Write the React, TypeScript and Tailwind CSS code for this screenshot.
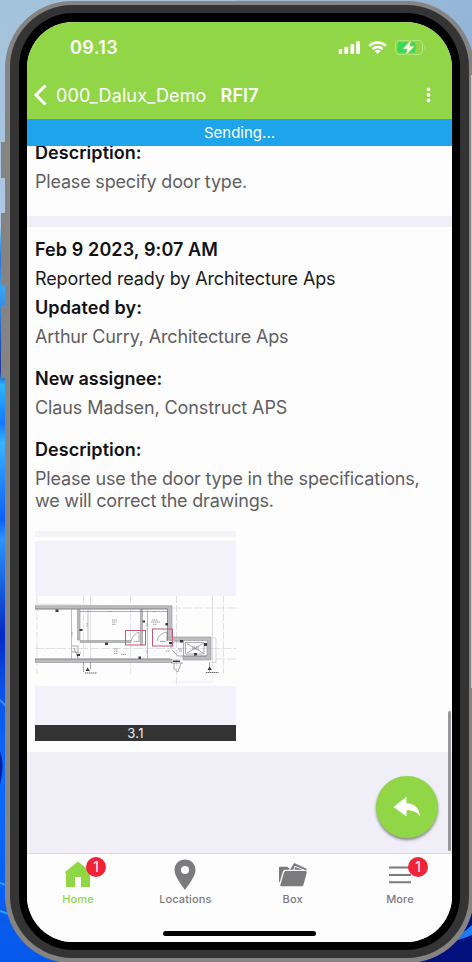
import type { ReactNode } from "react";

function Desktop() {
  return (
    <svg className="absolute inset-0" width="472" height="962" viewBox="0 0 472 962">
      <defs>
        <linearGradient id="sky" x1="0" y1="0" x2="0" y2="1">
          <stop offset="0" stopColor="#a3c3dc" />
          <stop offset="0.17" stopColor="#a8c6e2" />
          <stop offset="0.235" stopColor="#b0c8e4" />
          <stop offset="0.25" stopColor="#4aa6ee" />
          <stop offset="0.27" stopColor="#2d6fd6" />
          <stop offset="0.3" stopColor="#38a5f8" />
          <stop offset="0.36" stopColor="#2250b4" />
          <stop offset="0.385" stopColor="#28359c" />
          <stop offset="0.4" stopColor="#2cb4fb" />
          <stop offset="0.44" stopColor="#1478ff" />
          <stop offset="0.46" stopColor="#38b4ff" />
          <stop offset="0.54" stopColor="#0c5ff8" />
          <stop offset="0.56" stopColor="#2a96fb" />
          <stop offset="0.66" stopColor="#0428c6" />
          <stop offset="0.71" stopColor="#0b4ee6" />
          <stop offset="0.8" stopColor="#0b6cff" />
          <stop offset="1" stopColor="#0658ea" />
        </linearGradient>
        <linearGradient id="corner" x1="0" y1="0" x2="1" y2="1">
          <stop offset="0" stopColor="#9db9d2" />
          <stop offset="1" stopColor="#8db4dc" />
        </linearGradient>
      </defs>
      <rect width="236" height="962" fill="url(#sky)" />
      <rect x="236" width="236" height="100" fill="url(#corner)" />
      <rect x="236" y="860" width="236" height="102" fill="#00107c" />
      <path d="M440 944 Q458 938 472 925 V935 Q458 941 440 944Z" fill="#1d7af0" />
      <path d="M0 700 Q14 712 18 745" fill="none" stroke="#3a8cf8" strokeWidth="2" />
      <path d="M0 752 Q5 762 0 785Z" fill="#0420a0" />
      <path d="M0 883 Q14 887 24 896" fill="none" stroke="#2d9cfc" strokeWidth="2" />
      <path d="M0 911 Q14 915 24 924" fill="none" stroke="#2d9cfc" strokeWidth="2" />
    </svg>
  );
}

function StatusIcons() {
  return (
    <svg width="90" height="18" viewBox="338 38 90 18" className="block">
      <g fill="#fff">
        <rect x="338.600" y="49" width="3.600" height="5" rx="1" />
        <rect x="344.400" y="46.700" width="3.800" height="7.300" rx="1" />
        <rect x="350.400" y="44" width="3.800" height="10" rx="1" />
        <rect x="356.200" y="41" width="3.800" height="13" rx="1" />
      </g>
      <g fill="none" stroke="#fff" strokeWidth="2.500">
        <path d="M369.300 45.800 A11.800 11.800 0 0 1 385.900 45.800" />
        <path d="M372.600 49 A7.300 7.300 0 0 1 382.600 49" />
      </g>
      <path d="M377.600 54 L374.700 51.100 A4.200 4.200 0 0 1 380.500 51.100Z" fill="#fff" />
      <rect x="395.500" y="40.500" width="27" height="14" rx="4" fill="none" stroke="#b4e383" strokeWidth="1.100" />
      <path d="M424 45.500 Q425.500 47.500 424 49.800Z" fill="#b4e383" />
      <rect x="397.300" y="42.300" width="18.200" height="10.400" rx="2.300" fill="#35db5c" />
      <path d="M410.800 40.600 L403.300 48.700 H407.700 L406.200 54.600 L414 46.500 H409.500Z" fill="#fff" stroke="#8fd744" strokeWidth="1.400" paintOrder="stroke" strokeLinejoin="round" />
    </svg>
  );
}

function FloorPlan() {
  return (
    <svg width="201" height="90" viewBox="35 596 201 90" className="block bg-[#fdfdfe]">
      <g stroke="#d2d2d7" strokeWidth="0.700" fill="none">
        <path d="M37 596V674M83.500 596V672M130.500 596V674M176.500 596V690M223.500 596V674" strokeDasharray="7 2" />
        <path d="M90.500 596V668M212.500 596V668M35 604L172 607" />
        <path d="M35 648.500H236M172 608H236M172 659H236" strokeDasharray="9 2" />
        <path d="M172 682H213V668" stroke="#e6e6ea" />
      </g>
      <g fill="#bcbcc0" stroke="#939397" strokeWidth="0.600">
        <path d="M35 605.800H172V640H167.500V609H35Z" />
        <path d="M35 659H172V662.500H35Z" />
        <path d="M77.500 609H80V640H77.500ZM80 640.500H131V642.500H80Z" />
        <path d="M140.500 609H142.500V645H140.500Z" />
        <path d="M169 637H211V660H183V656H207V640.500H169Z" />
      </g>
      <g stroke="#77777c" strokeWidth="0.600" fill="none">
        <path d="M35 609H167.500V641M35 659H170M80 611.500H168" />
        <path d="M71.500 609V659M147.500 610V659M88 609V641M78 656V660" stroke="#96969a" />
        <path d="M183.500 640V656H207M185.500 642.500H204V654H185.500ZM187 643.500L203 653M187 653L203 643.500" />
        <path d="M72 646H78V652H72M74 648L78 658M171 648V644Q176 640 180 642M172 650L178 656H183" />
        <path d="M171 663H183M174 663V669L178 672L181 663" />
        <path d="M83.500 662V672M90.500 662V669M209.500 662V672" />
        <path d="M131 641Q133 634 139 632V641M157 641Q159 633 167 632V641" />
      </g>
      <path d="M211 662.500H216V638H212" fill="none" stroke="#c9c9ce" strokeWidth="0.700" />
      <g fill="#3a3a3c">
        <rect x="55.500" y="609.500" width="3" height="2.500" /><rect x="79.500" y="629" width="3" height="2" />
        <rect x="105" y="642.500" width="3" height="2.500" /><rect x="165.500" y="623" width="2.500" height="2.500" />
        <rect x="142.500" y="620.500" width="2.500" height="2" /><rect x="138.500" y="656.500" width="2.500" height="2.500" />
        <rect x="169" y="642" width="4" height="2" /><rect x="180" y="640" width="3" height="2.500" />
        <rect x="204" y="643" width="3" height="3" /><rect x="194" y="653" width="3" height="2.500" />
        <rect x="173" y="660.500" width="7" height="1.500" /><rect x="77" y="654" width="3" height="2" />
        <path d="M87.500 667.500L90 671L85.500 671ZM209.500 666.500L212 670L207.500 670Z" />
      </g>
      <g stroke="#909094" strokeWidth="0.900" strokeDasharray="1.500 0.500">
        <path d="M112 620H117M112 622H116.500M112 624.300H116M114 649H118M114 651.300H118M114 653.500H117M152 620H158M151 622H160M153 624.300H157M192 647H199M192 649H199" />
        <path d="M108 611.500H112M153 611.500H157M72 632V636M87 623V627M147 623V627M147 650V653M134 641.500H140M160 641.500H166M121 654.500H126M166 651H170M178 649H182M179 651H182M76 653H81" />
        <path d="M85 673H96.500M206 672.500H218.500" stroke="#555" />
      </g>
      <g fill="none" stroke="#c45b72" strokeWidth="1">
        <rect x="125.500" y="630.500" width="20" height="14.500" /><rect x="152.500" y="629" width="20" height="17" />
      </g>
    </svg>
  );
}

function Badge() {
  return (
    <span className="absolute left-[33px] top-0 flex h-5 w-5 items-center justify-center rounded-full bg-[#f02337] text-[14px] leading-none text-white">1</span>
  );
}

function Tab({ label, active, badge, children }: { label: string; active?: boolean; badge?: boolean; children: ReactNode }) {
  return (
    <div className={`relative flex w-[50px] flex-col items-center ${active ? "text-[#8fd744]" : "text-[#7b7b7e]"}`}>
      <svg width="34" height="34" viewBox="0 0 34 34" fill="currentColor" className="block">{children}</svg>
      <span className="whitespace-nowrap text-[11px] font-medium leading-4 tracking-[0.12px]">{label}</span>
      {badge && <Badge />}
    </div>
  );
}

const heading = "font-semibold text-[#111113]";
const value = "mt-[7px] text-[#5f5f61]";

export default function App() {
  return (
    <div className="relative h-[962px] w-[472px] overflow-hidden bg-[#a3c3dc] font-['Inter','Liberation_Sans',sans-serif]">
      <Desktop />
      <span className="absolute left-[1px] top-[142px] h-9 w-[6px] bg-[#858381]" />
      <span className="absolute left-[1px] top-[213px] h-[72px] w-[6px] bg-[#858381]" />
      <span className="absolute left-[1px] top-[305px] h-[73px] w-[6px] bg-[#858381]" />
      <div className="absolute left-[5px] top-[0.500px] h-[962px] w-[469px] rounded-[67px] bg-[#868482] p-[5px] pt-[4.500px]">
        <div className="h-[953px] w-[459px] rounded-[62px] bg-[#333433] px-[9px] pt-[8px]">
          <div className="h-[937px] w-[441px] rounded-[54px] bg-black px-2 pt-[9px]">
            <div className="relative flex h-[920px] w-[425px] flex-col overflow-hidden rounded-[46px] bg-[#fdfdfe]">
              <header className="h-[97px] shrink-0 bg-[#91d646] text-white">
                <div className="flex h-[50px] items-start justify-between pl-[43px] pr-[24px] pt-[16px]">
                  <span className="text-[18px] font-semibold leading-5 tracking-[0.4px]">09.13</span>
                  <StatusIcons />
                </div>
                <div className="flex h-[46px] items-center pl-[6px] pr-[21px]">
                  <svg width="16" height="24" viewBox="0 0 16 24" className="block"><path d="M12.500 2.500L3 12L12.500 21.500" fill="none" stroke="#fff" strokeWidth="3" /></svg>
                  <span className="ml-[7px] text-[18px] tracking-[0.12px]">000_Dalux_Demo</span>
                  <span className="ml-[14px] text-[18px] font-semibold tracking-[0.1px]">RFI7</span>
                  <svg width="5" height="16" viewBox="0 0 5 16" className="ml-auto block" fill="#fff"><circle cx="2.500" cy="2.500" r="1.900" /><circle cx="2.500" cy="8" r="1.900" /><circle cx="2.500" cy="13.500" r="1.900" /></svg>
                </div>
              </header>
              <div className="flex h-[27px] shrink-0 items-center justify-center bg-[#1da4ea] pt-px text-[15px] tracking-[0px] text-white">Sending...</div>

              <main className="flex h-[707px] shrink-0 flex-col overflow-hidden bg-[#f0eff8] text-[18px] leading-[22px]">
                <section className="h-[70px] shrink-0 bg-[#fdfdfe] pl-2">
                  <div className="-mt-[4px]">
                    <h3 className={`tracking-[0.05px] ${heading}`}>Description:</h3>
                    <p className={`tracking-[-0.19px] ${value}`}>Please specify door type.</p>
                  </div>
                </section>
                <section className="mt-[11px] h-[525px] shrink-0 bg-[#fdfdfe] pl-2 pt-[12px]">
                  <h2 className={`tracking-[0.1px] ${heading}`}>Feb 9 2023, 9:07 AM</h2>
                  <p className="mt-[7px] tracking-[-0.12px] text-[#1a1a1c]">Reported ready by Architecture Aps</p>
                  <h3 className={`mt-[7px] tracking-[0.12px] ${heading}`}>Updated by:</h3>
                  <p className={`tracking-[-0.16px] ${value}`}>Arthur Curry, Architecture Aps</p>
                  <h3 className={`mt-[20px] tracking-[-0.04px] ${heading}`}>New assignee:</h3>
                  <p className={`tracking-[-0.11px] ${value}`}>Claus Madsen, Construct APS</p>
                  <h3 className={`mt-[20px] tracking-[0.05px] ${heading}`}>Description:</h3>
                  <p className={`tracking-[-0.17px] ${value}`}>Please use the door type in the specifications,<br /><span className="tracking-[-0.2px]">we will correct the drawings.</span></p>
                  <div className="mt-[19px] h-[6px] w-[201px] bg-[#f4f4f7]" />
                  <figure className="mt-1 w-[201px]">
                    <div className="h-[55px] bg-[#f3f2fb]" />
                    <FloorPlan />
                    <div className="h-[39px] bg-[#f3f2fb]" />
                    <figcaption className="flex h-4 items-center justify-center bg-[#333334] text-[13px] leading-4 tracking-[0.3px] text-[#ededed]">3.1</figcaption>
                  </figure>
                </section>
              </main>

              <nav className="relative h-[89px] shrink-0 border-t border-[#d9d9e4] bg-[#fdfdfe]">
                <div className="flex justify-between pl-[26px] pr-[27px] pt-[3px]">
                  <Tab label="Home" active badge><path d="M17 4.500L4 15L5.200 17H5V30H14V20H20V30H29V17L30 15Z" /></Tab>
                  <Tab label="Locations"><path fillRule="evenodd" d="M17 2.500C11 2.500 6.500 7 6.500 13C6.500 19 12.500 26.500 17 33C21.500 26.500 27.500 19 27.500 13C27.500 7 23 2.500 17 2.500ZM17 9A4 4 0 1 1 17 17A4 4 0 1 1 17 9Z" /></Tab>
                  <Tab label="Box">
                    <path d="M3 25V10.800Q3 9.800 4 9.800H11.500L13.500 11.800V12.800H9Q7.500 12.800 7 14.300L3.800 25Z" />
                    <path d="M14 12.800L18.200 6L30.200 11.500Q31 12 30.500 13.500L18.800 8.700L17.300 12.800Z" />
                    <path d="M18.300 12.800L19.300 10L27 12.800Z" />
                    <path d="M10 14H29.500Q31.200 14 30.700 15.700L27.400 28Q27 29.200 25.800 29.200H5.200Q3.900 29.200 4.300 28L8 15.400Q8.500 14 10 14Z" />
                  </Tab>
                  <Tab label="More" badge><path d="M6 9.500H28V11.500H6ZM6 17H28V19H6ZM6 24.300H28V26.300H6Z" /></Tab>
                </div>
                <div className="absolute left-[136px] top-[77px] h-[5px] w-[153px] rounded-full bg-black" />
              </nav>

              <button className="absolute left-[348.500px] top-[754px] flex h-[62px] w-[62px] items-center justify-center rounded-full bg-[#91d646] shadow-[0_2px_3px_rgba(0,0,0,0.45)]">
                <svg width="28" height="22" viewBox="393 796 28 22"><path d="M393.500 807L406.500 796.800V803.300C414 803.500 419.500 808 420 816.300C416.500 811.500 412 810.300 406.500 810.300V816.500Z" fill="#fff" /></svg>
              </button>
              <div className="absolute right-[1px] top-[689px] h-[140px] w-[3px] rounded-full bg-[#98989c]" />
            </div>
          </div>
        </div>
      </div>
      <span className="absolute right-0 top-[75px] h-[613px] w-[1px] bg-[#c8c8c8]" />
    </div>
  );
}
